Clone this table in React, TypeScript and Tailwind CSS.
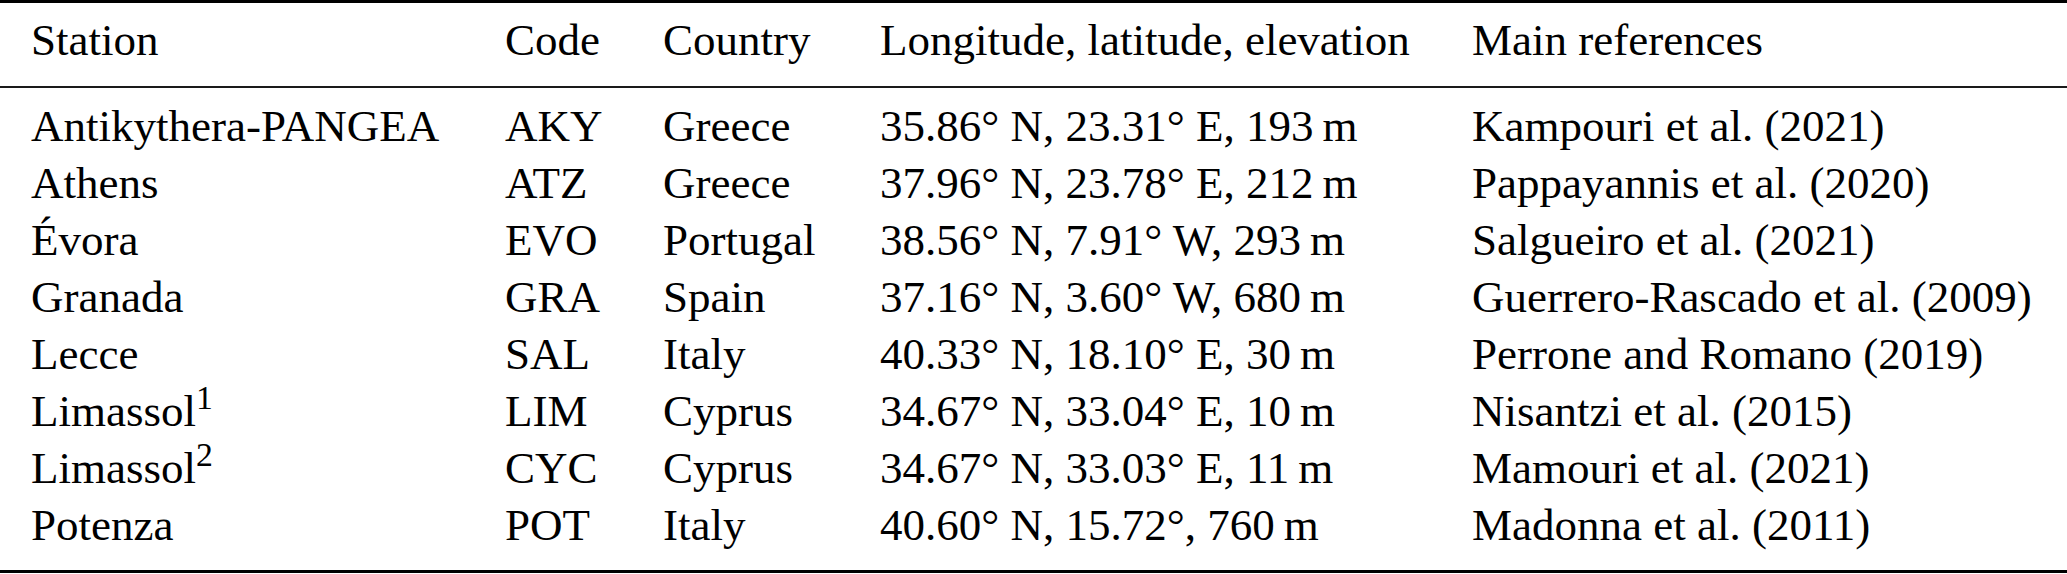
const rows = [
  { station: "Antikythera-PANGEA", sup: "", code: "AKY", country: "Greece", coords: "35.86° N, 23.31° E, 193\u2009m", ref: "Kampouri et al. (2021)" },
  { station: "Athens", sup: "", code: "ATZ", country: "Greece", coords: "37.96° N, 23.78° E, 212\u2009m", ref: "Pappayannis et al. (2020)" },
  { station: "Évora", sup: "", code: "EVO", country: "Portugal", coords: "38.56° N, 7.91° W, 293\u2009m", ref: "Salgueiro et al. (2021)" },
  { station: "Granada", sup: "", code: "GRA", country: "Spain", coords: "37.16° N, 3.60° W, 680\u2009m", ref: "Guerrero-Rascado et al. (2009)" },
  { station: "Lecce", sup: "", code: "SAL", country: "Italy", coords: "40.33° N, 18.10° E, 30\u2009m", ref: "Perrone and Romano (2019)" },
  { station: "Limassol", sup: "1", code: "LIM", country: "Cyprus", coords: "34.67° N, 33.04° E, 10\u2009m", ref: "Nisantzi et al. (2015)" },
  { station: "Limassol", sup: "2", code: "CYC", country: "Cyprus", coords: "34.67° N, 33.03° E, 11\u2009m", ref: "Mamouri et al. (2021)" },
  { station: "Potenza", sup: "", code: "POT", country: "Italy", coords: "40.60° N, 15.72°, 760\u2009m", ref: "Madonna et al. (2011)" },
];

const cols = "grid grid-cols-[474px_158px_217px_592px_1fr] pl-[31px]";

export default function App() {
  return (
    <div className="w-[2067px] h-[574px] bg-white text-black font-['Liberation_Serif',serif] text-[45px] leading-[57px] whitespace-nowrap">
      {/* top rule */}
      <div className="h-[3px] bg-black" />

      {/* header */}
      <div className={`${cols} pt-[9px] pb-[17px]`}>
        <div>Station</div>
        <div>Code</div>
        <div>Country</div>
        <div>Longitude, latitude, elevation</div>
        <div>Main references</div>
      </div>

      {/* mid rule */}
      <div className="h-[2px] bg-[#1a1a1a]" />

      {/* body */}
      <div className={`${cols} pt-[10px] pb-[16px]`}>
        {rows.map((r, i) => (
          <div key={i} className="contents">
            <div>
              {r.station}
              {r.sup && <sup>{r.sup}</sup>}
            </div>
            <div>{r.code}</div>
            <div>{r.country}</div>
            <div>{r.coords}</div>
            <div>{r.ref}</div>
          </div>
        ))}
      </div>

      {/* bottom rule */}
      <div className="h-[3px] bg-black" />
    </div>
  );
}
